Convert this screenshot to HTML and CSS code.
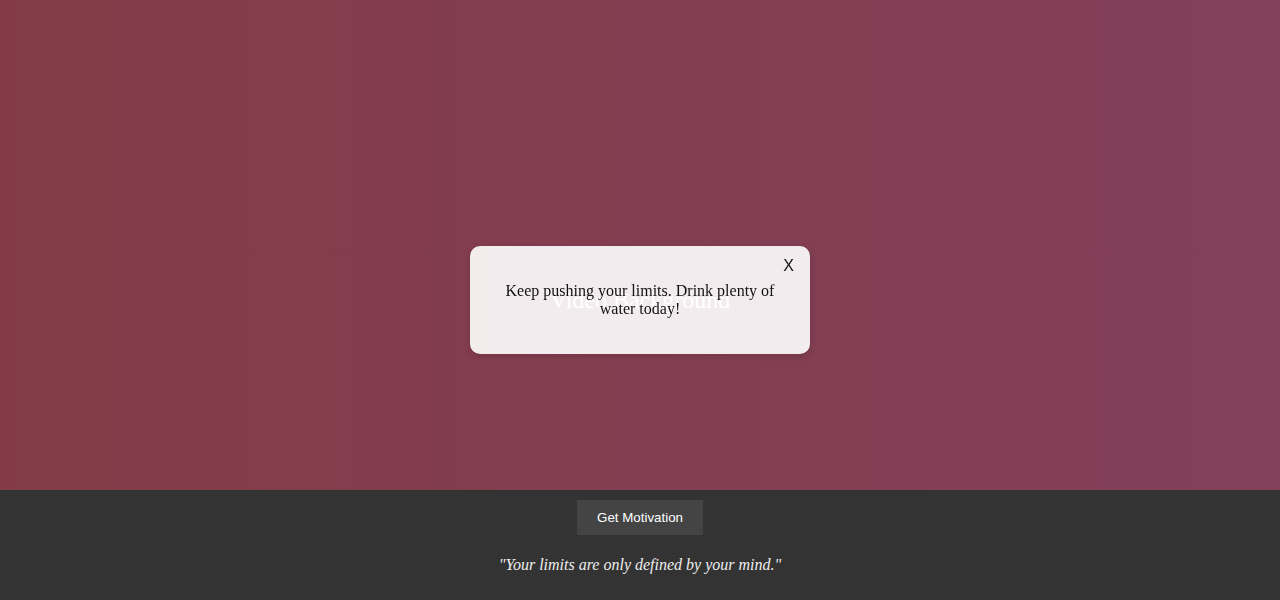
FILE: index.html
```html
<!DOCTYPE html>
<html lang="en">
<head>
<meta charset="utf-8">
<title>Motivation</title>
<link rel="stylesheet" href="styles.css">
</head>
<body>
<section class="hero">
  <div class="hero-text">Video Background</div>
</section>
<div class="modal">
  <span class="close">X</span>
  <p class="modal-text">Keep pushing your limits. Drink plenty of water today!</p>
</div>
<footer class="footer">
  <button class="btn">Get Motivation</button>
  <p class="quote">"Your limits are only defined by your mind."</p>
</footer>
</body>
</html>
```
FILE: styles.css
```css
html, body {
  margin: 0;
  padding: 0;
}
body {
  font-family: "Liberation Serif", "Times New Roman", serif;
  background: #333;
}
.hero {
  height: 100vh;
  background: linear-gradient(to right, #833c47, #82405a);
  display: flex;
  align-items: center;
  justify-content: center;
}
.hero-text {
  color: #fff;
  font-size: 24px;
}
.modal {
  position: fixed;
  top: 50%;
  left: 50%;
  transform: translate(-50%, -50%);
  width: 300px;
  padding: 20px;
  background: rgba(255, 255, 255, 0.9);
  border-radius: 10px;
  box-shadow: 0 2px 6px rgba(0, 0, 0, 0.15);
  text-align: center;
  color: #111;
}
.close {
  position: absolute;
  top: 11px;
  right: 16px;
  font-family: "Liberation Sans", Arial, sans-serif;
  font-size: 16px;
  cursor: pointer;
}
.modal-text {
  margin: 16px 0;
  font-size: 16px;
}
.footer {
  position: fixed;
  left: 0;
  right: 0;
  bottom: 0;
  height: 110px;
  box-sizing: border-box;
  background: #333;
  padding: 10px;
  text-align: center;
  color: #eee;
}
.btn {
  font-family: "Liberation Sans", Arial, sans-serif;
  font-size: 13.33px;
  background: #444;
  color: #fff;
  border: none;
  padding: 10px 20px;
  cursor: pointer;
}
.quote {
  font-style: italic;
  font-size: 16px;
  margin: 21px 0 16px;
}
```
